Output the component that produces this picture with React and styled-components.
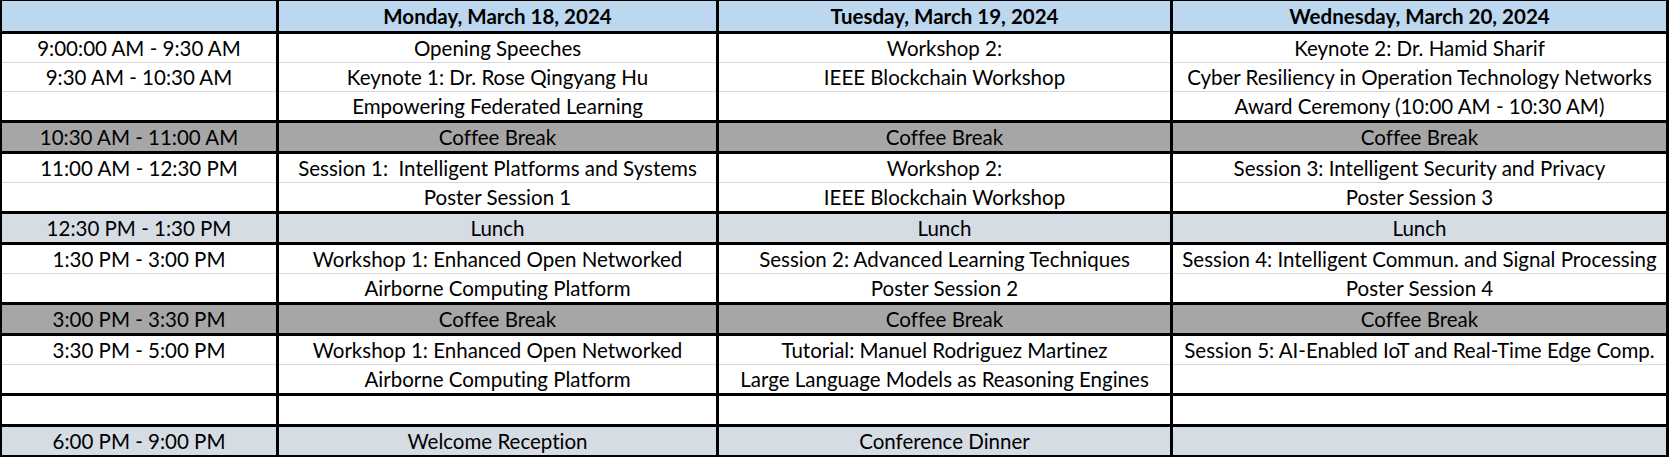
import React from 'react'
import styled, { createGlobalStyle } from 'styled-components'

const GlobalStyle = createGlobalStyle`
  html, body {
    margin: 0;
    padding: 0;
    background: #ffffff;
  }
`

const fills = {
  header: '#bdd7ee',
  plain: '#ffffff',
  coffee: '#a6a6a6',
  lunch: '#d6dce4',
}

const Sheet = styled.div`
  width: 1669px;
  box-sizing: border-box;
  display: flex;
  flex-direction: column;
  gap: 3px;
  padding: 1px 3px 2px 2px;
  background: #000000;
  font-family: Lato, 'Liberation Sans', sans-serif;
  font-size: 20.5px;
  font-variant-ligatures: none;
  color: #000000;
`

const Block = styled.div`
  display: grid;
  grid-template-columns: 274px 437px 451px 1fr;
  column-gap: 3px;
`

const Cell = styled.div`
  display: flex;
  flex-direction: column;
  background: ${({ fill }) => fills[fill]};
`

const Line = styled.div`
  height: ${({ tall }) => (tall ? '30px' : '28px')};
  display: flex;
  align-items: center;
  justify-content: center;
  white-space: pre;
  font-weight: ${({ bold }) => (bold ? 700 : 400)};
  & + & {
    border-top: 1px solid #d9d9d9;
  }
`

const header = ['', 'Monday, March 18, 2024', 'Tuesday, March 19, 2024', 'Wednesday, March 20, 2024']

const blocks = [
  {
    fill: 'plain',
    cols: [
      ['9:00:00 AM - 9:30 AM', '9:30 AM - 10:30 AM', ''],
      ['Opening Speeches', 'Keynote 1: Dr. Rose Qingyang Hu', 'Empowering Federated Learning'],
      ['Workshop 2:', 'IEEE Blockchain Workshop', ''],
      ['Keynote 2: Dr. Hamid Sharif', 'Cyber Resiliency in Operation Technology Networks', 'Award Ceremony (10:00 AM - 10:30 AM)'],
    ],
  },
  {
    fill: 'coffee',
    cols: [['10:30 AM - 11:00 AM'], ['Coffee Break'], ['Coffee Break'], ['Coffee Break']],
  },
  {
    fill: 'plain',
    cols: [
      ['11:00 AM - 12:30 PM', ''],
      ['Session 1:  Intelligent Platforms and Systems', 'Poster Session 1'],
      ['Workshop 2:', 'IEEE Blockchain Workshop'],
      ['Session 3: Intelligent Security and Privacy', 'Poster Session 3'],
    ],
  },
  {
    fill: 'lunch',
    cols: [['12:30 PM - 1:30 PM'], ['Lunch'], ['Lunch'], ['Lunch']],
  },
  {
    fill: 'plain',
    cols: [
      ['1:30 PM - 3:00 PM', ''],
      ['Workshop 1: Enhanced Open Networked', 'Airborne Computing Platform'],
      ['Session 2: Advanced Learning Techniques', 'Poster Session 2'],
      ['Session 4: Intelligent Commun. and Signal Processing', 'Poster Session 4'],
    ],
  },
  {
    fill: 'coffee',
    cols: [['3:00 PM - 3:30 PM'], ['Coffee Break'], ['Coffee Break'], ['Coffee Break']],
  },
  {
    fill: 'plain',
    cols: [
      ['3:30 PM - 5:00 PM', ''],
      ['Workshop 1: Enhanced Open Networked', 'Airborne Computing Platform'],
      ['Tutorial: Manuel Rodriguez Martinez', 'Large Language Models as Reasoning Engines'],
      ['Session 5: AI-Enabled IoT and Real-Time Edge Comp.', ''],
    ],
  },
  {
    fill: 'plain',
    cols: [[''], [''], [''], ['']],
  },
  {
    fill: 'lunch',
    cols: [['6:00 PM - 9:00 PM'], ['Welcome Reception'], ['Conference Dinner'], ['']],
  },
]

const App = () => {
  return (
    <>
      <GlobalStyle />
      <Sheet>
        <Block>
          {header.map((title, i) => (
            <Cell key={i} fill="header">
              <Line tall bold>
                {title}
              </Line>
            </Cell>
          ))}
        </Block>
        {blocks.map((block, b) => (
          <Block key={b}>
            {block.cols.map((lines, c) => (
              <Cell key={c} fill={block.fill}>
                {lines.map((text, l) => (
                  <Line key={l}>{text}</Line>
                ))}
              </Cell>
            ))}
          </Block>
        ))}
      </Sheet>
    </>
  )
}

export default App
